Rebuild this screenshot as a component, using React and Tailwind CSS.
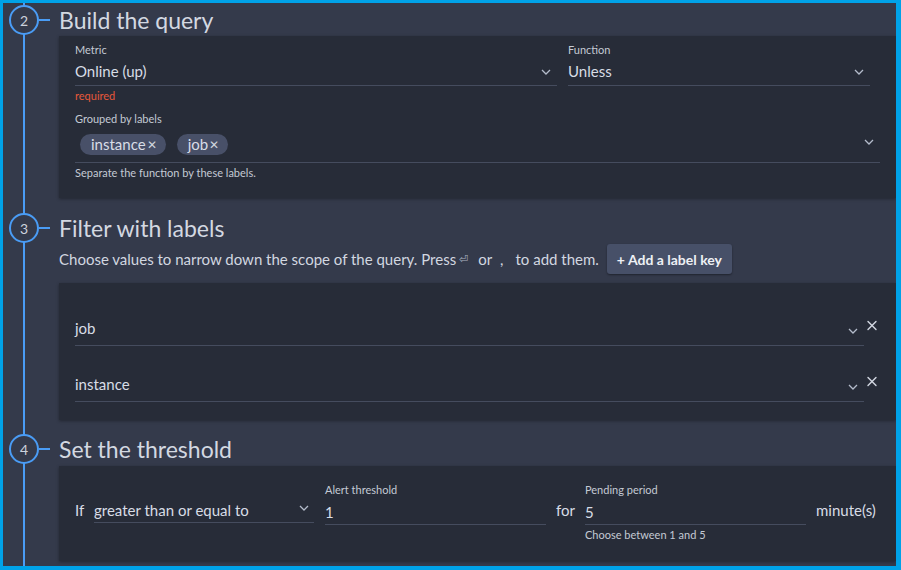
import { X } from 'lucide-react';

const FONT = { fontFamily: 'Lato, "Noto Sans", sans-serif' };

function Chevron({ className = '' }) {
  return (
    <svg width="10" height="6" viewBox="0 0 10 6" className={className} fill="none">
      <path d="M1 1l4 4 4-4" stroke="#b4bccb" strokeWidth="1.3" />
    </svg>
  );
}

function StepHeader({ n, title }) {
  return (
    <div className="flex items-center h-[32px]">
      <div className="ml-[6px] w-[30px] h-[30px] rounded-full border-2 border-[#4a9cf5] bg-[#343a4b] flex items-center justify-center text-[14px] text-[#ccd2dc] relative z-10">
        {n}
      </div>
      <div className="w-[11px] h-[2px] bg-[#4a9cf5]" />
      <h2 className="ml-[9px] text-[23px] leading-[32px] text-[#d3d8e1] font-normal">{title}</h2>
    </div>
  );
}

function Chip({ label }) {
  return (
    <span className="h-[21px] rounded-full bg-[#485068] pl-[11px] pr-[9px] flex items-center text-[15px] text-[#d8dde6]">
      {label}
      <span className="ml-[1px] text-[12px] leading-none text-[#d0d5de]">✕</span>
    </span>
  );
}

function LabelRow({ value }) {
  return (
    <div className="flex items-start">
      <div className="flex-1 h-[28px] border-b border-[#454c5e] flex items-start justify-between">
        <span className="text-[15px] leading-[20px] text-[#d8dde6]">{value}</span>
        <Chevron className="mt-[10px] mr-[6px]" />
      </div>
      <button className="w-[16px] -mt-[1px] flex justify-center text-[#d3d9e2]">
        <X size={17} strokeWidth={2} />
      </button>
    </div>
  );
}

export default function App() {
  return (
    <div
      style={FONT}
      className="w-[901px] h-[570px] bg-[#343a4b] border-[#00a2e8] border-t-[3px] border-l-[3px] border-r-[5px] border-b-[4px] overflow-hidden relative"
    >
      <div className="absolute left-[20px] top-0 bottom-0 w-[2px] bg-[#4a9cf5]" />

      <div className="pt-[1px]">
        <StepHeader n="2" title="Build the query" />
        <div className="ml-[56px] bg-[#272c38] shadow-[0_1px_3px_rgba(0,0,0,0.35)] pl-[16px] pr-[16px] pt-[6px] pb-[17px]">
          <div className="flex gap-[11px]">
            <div className="w-[482px]">
              <div className="text-[11px] leading-[16px] text-[#c4cad4]">Metric</div>
              <div className="h-[28px] border-b border-[#454c5e] flex items-center justify-between">
                <span className="text-[15px] text-[#d8dde6]">Online (up)</span>
                <Chevron className="mr-[6px]" />
              </div>
              <div className="mt-[2px] text-[11px] leading-[16px] text-[#e6583a]">required</div>
            </div>
            <div className="w-[302px]">
              <div className="text-[11px] leading-[16px] text-[#c4cad4]">Function</div>
              <div className="h-[28px] border-b border-[#454c5e] flex items-center justify-between">
                <span className="text-[15px] text-[#d8dde6]">Unless</span>
                <Chevron className="mr-[6px]" />
              </div>
            </div>
          </div>
          <div className="mt-[7px] text-[11px] leading-[16px] text-[#c4cad4]">Grouped by labels</div>
          <div className="h-[36px] border-b border-[#454c5e] flex items-center justify-between pl-[5px]">
            <div className="flex gap-[11px]">
              <Chip label="instance" />
              <Chip label="job" />
            </div>
            <Chevron className="mr-[6px] -mt-[6px]" />
          </div>
          <div className="mt-[2px] text-[11px] leading-[16px] text-[#c4cad4]">
            Separate the function by these labels.
          </div>
        </div>
      </div>

      <div className="mt-[14px]">
        <StepHeader n="3" title="Filter with labels" />
        <div className="ml-[56px] h-[30px] flex items-center text-[15px] text-[#d2d7e0]">
          <span>Choose values to narrow down the scope of the query. Press</span>
          <span className="ml-[3px] text-[11px] text-[#aab2c0]">⏎</span>
          <span className="ml-[10px]">or</span>
          <span className="ml-[8px]">,</span>
          <span className="ml-[12px]">to add them.</span>
          <button className="ml-[8px] h-[30px] px-[10px] rounded-[3px] bg-[#475068] shadow-[0_1px_2px_rgba(0,0,0,0.4)] text-[14px] font-bold text-[#eef1f5]">
            + Add a label key
          </button>
        </div>
        <div className="mt-[9px] ml-[56px] bg-[#272c38] shadow-[0_1px_3px_rgba(0,0,0,0.35)] pl-[16px] pr-[16px] pt-[35px] pb-[18px]">
          <LabelRow value="job" />
          <div className="mt-[28px]">
            <LabelRow value="instance" />
          </div>
        </div>
      </div>

      <div className="mt-[13px]">
        <StepHeader n="4" title="Set the threshold" />
        <div className="mt-[1px] ml-[56px] bg-[#272c38] shadow-[0_1px_3px_rgba(0,0,0,0.35)] pl-[16px] pt-[16px] pb-[18px] flex items-start text-[15px] text-[#d8dde6]">
          <div className="w-[19px] mt-[16px] h-[25px] flex items-center">If</div>
          <div className="mt-[16px] w-[220px] h-[25px] border-b border-[#454c5e] flex items-center justify-between">
            <span>greater than or equal to</span>
            <Chevron className="mr-[5px] -mt-[4px]" />
          </div>
          <div className="ml-[11px] w-[221px]">
            <div className="text-[11px] leading-[16px] text-[#c4cad4]">Alert threshold</div>
            <div className="h-[27px] border-b border-[#454c5e] flex items-center pt-[2px]">1</div>
          </div>
          <div className="ml-[10px] w-[29px] mt-[16px] h-[25px] flex items-center">for</div>
          <div className="w-[221px]">
            <div className="text-[11px] leading-[16px] text-[#c4cad4]">Pending period</div>
            <div className="h-[27px] border-b border-[#454c5e] flex items-center pt-[2px]">5</div>
            <div className="mt-[2px] text-[11px] leading-[16px] text-[#c4cad4]">Choose between 1 and 5</div>
          </div>
          <div className="ml-[10px] mt-[16px] h-[25px] flex items-center">minute(s)</div>
        </div>
      </div>
    </div>
  );
}
